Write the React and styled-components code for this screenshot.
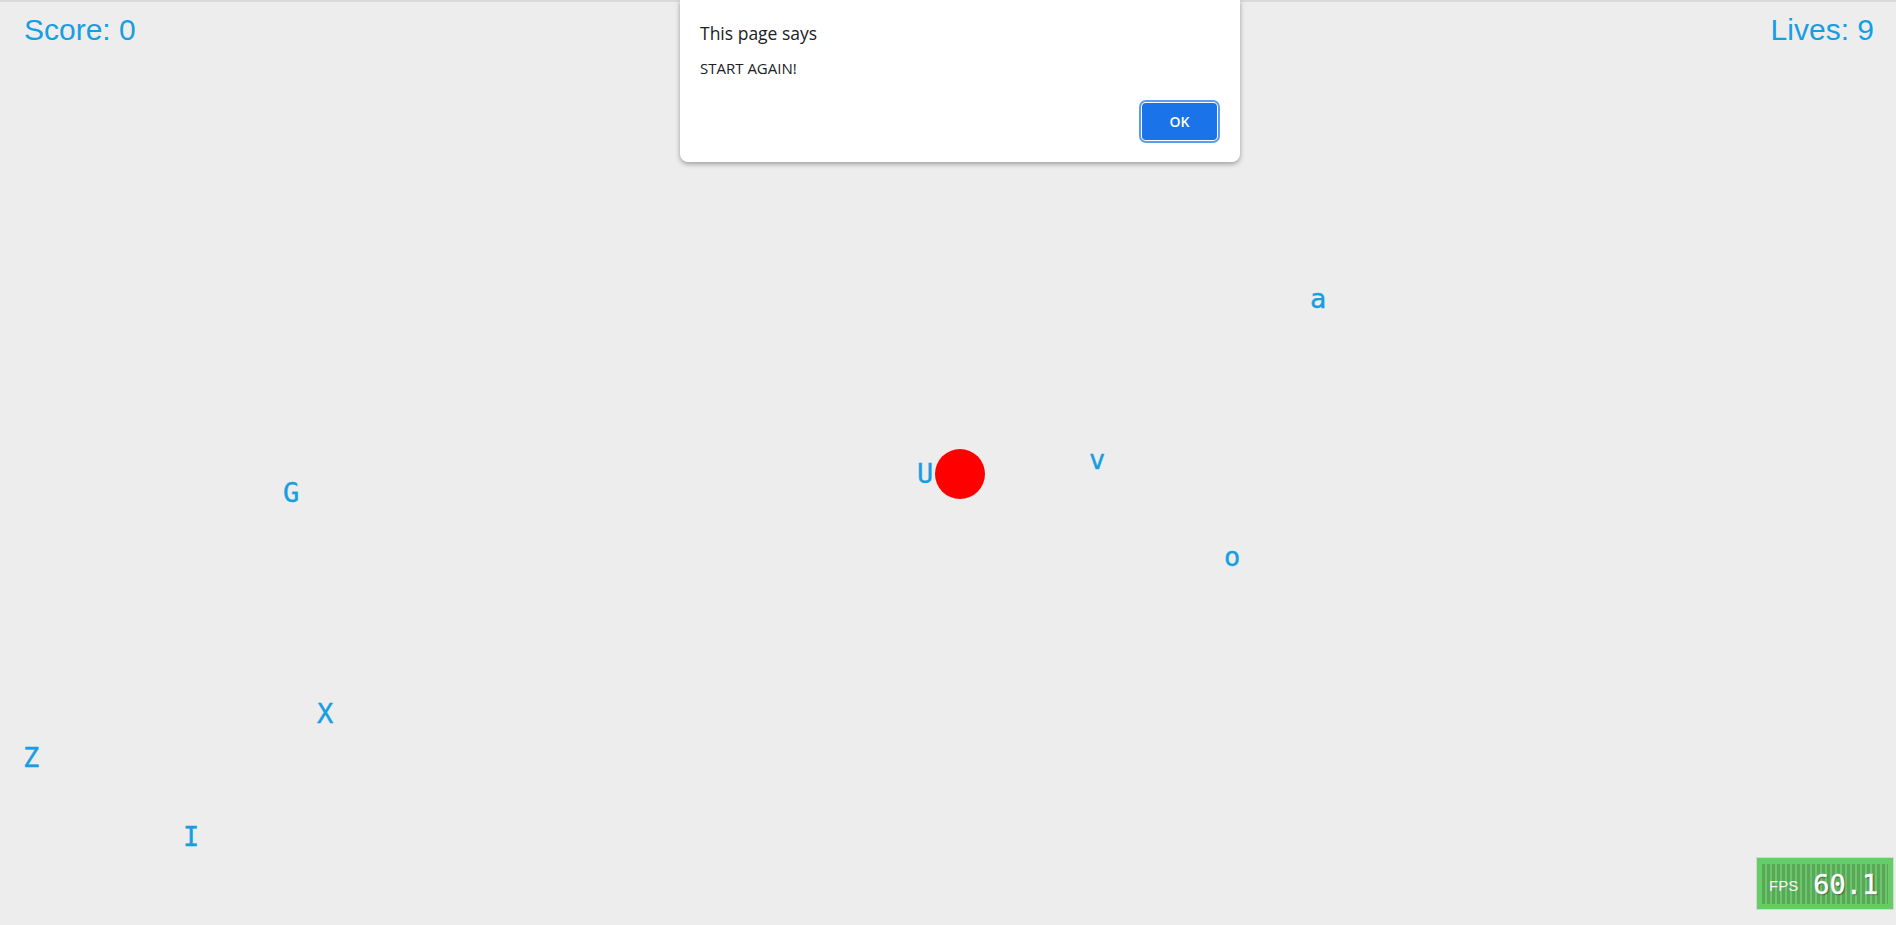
import React from 'react'
import styled, { createGlobalStyle } from 'styled-components'

const GlobalStyle = createGlobalStyle`
  html, body {
    margin: 0;
    padding: 0;
    background: #ededed;
    overflow: hidden;
  }
  * {
    box-sizing: border-box;
  }
`

const letters = [
  { ch: 'a', x: 1310, y: 283 },
  { ch: 'v', x: 1089, y: 444 },
  { ch: 'o', x: 1224, y: 541 },
  { ch: 'G', x: 283, y: 477 },
  { ch: 'U', x: 917, y: 458 },
  { ch: 'X', x: 317, y: 698 },
  { ch: 'Z', x: 23, y: 742 },
  { ch: 'I', x: 183, y: 821 },
]

const Stage = styled.div`
  position: relative;
  width: 100vw;
  height: 100vh;
  border-top: 2px solid #dadada;
  background: #ededed;
`

const Hud = styled.div`
  display: flex;
  justify-content: space-between;
  align-items: flex-start;
  padding: 11px 22px 0 24px;
`

const HudText = styled.div`
  font-family: 'Liberation Sans', Arial, sans-serif;
  font-size: 30px;
  color: #179ee2;
`

const Letter = styled.span.attrs(p => ({
  style: { left: p.$x + 'px', top: p.$y + 'px' },
}))`
  position: absolute;
  font-family: 'DejaVu Sans Mono', monospace;
  font-size: 27px;
  line-height: 1;
  color: #179ee2;
  -webkit-text-stroke: 0.4px #179ee2;
`

const Ball = styled.div`
  position: absolute;
  left: 935px;
  top: 447px;
  width: 50px;
  height: 50px;
  border-radius: 50%;
  background: #ff0000;
`

const Dialog = styled.div`
  position: absolute;
  top: -2px;
  left: 680px;
  width: 560px;
  display: flex;
  flex-direction: column;
  padding: 21px 20px 22px;
  background: #fff;
  border-radius: 0 0 8px 8px;
  box-shadow: 0 2px 5px rgba(0, 0, 0, 0.35);
  font-family: 'Open Sans', 'Noto Sans', sans-serif;
  color: #202124;
`

const DialogTitle = styled.div`
  font-size: 17.5px;
`

const DialogMessage = styled.div`
  margin-top: 13px;
  font-size: 15px;
`

const DialogFooter = styled.div`
  display: flex;
  justify-content: flex-end;
  margin-top: 25px;
  padding-right: 3px;
`

const OkButton = styled.button`
  width: 75px;
  height: 37px;
  border: none;
  border-radius: 4px;
  background: #1a73e8;
  color: #fff;
  font-family: 'Open Sans', 'Noto Sans', sans-serif;
  font-weight: 600;
  font-size: 14px;
  box-shadow: 0 0 0 1px #fff, 0 0 0 3px #5b9cf2;
  cursor: pointer;
`

const FpsMeter = styled.div`
  position: absolute;
  right: 2px;
  bottom: 15px;
  width: 138px;
  height: 53px;
  padding: 6px 5px 5px 5px;
  background: #66cc66;
  border: 1px solid #d6d6d6;
`

const FpsGraph = styled.div`
  display: flex;
  align-items: center;
  height: 100%;
  padding-left: 7px;
  gap: 15px;
  background: repeating-linear-gradient(
    to right,
    #58a858 0px,
    #58a858 3px,
    #6cc46c 3px,
    #6cc46c 5px
  );
`

const FpsLabel = styled.span`
  font-family: 'Liberation Sans', Arial, sans-serif;
  font-size: 15px;
  color: #f4f4f4;
  margin-top: 2px;
`

const FpsValue = styled.span`
  font-family: 'DejaVu Sans Mono', monospace;
  font-size: 27px;
  color: #fff;
  -webkit-text-stroke: 0.4px #fff;
  text-shadow: 1px 1px 1px rgba(0, 0, 0, 0.5);
`

export default function App() {
  return (
    <>
      <GlobalStyle />
      <Stage>
        <Hud>
          <HudText>Score: 0</HudText>
          <HudText>Lives: 9</HudText>
        </Hud>

        {letters.map((l, i) => (
          <Letter key={i} $x={l.x} $y={l.y}>{l.ch}</Letter>
        ))}

        <Ball />

        <FpsMeter>
          <FpsGraph>
            <FpsLabel>FPS</FpsLabel>
            <FpsValue>60.1</FpsValue>
          </FpsGraph>
        </FpsMeter>

        <Dialog>
          <DialogTitle>This page says</DialogTitle>
          <DialogMessage>START AGAIN!</DialogMessage>
          <DialogFooter>
            <OkButton>OK</OkButton>
          </DialogFooter>
        </Dialog>
      </Stage>
    </>
  )
}
